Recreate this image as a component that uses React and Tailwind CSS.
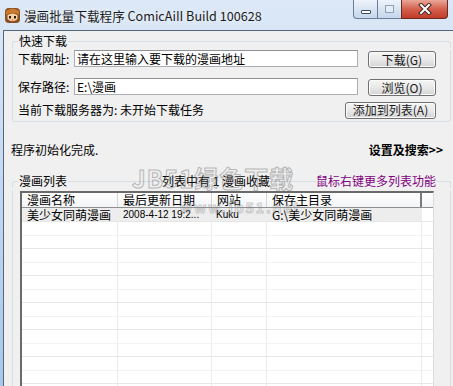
import React from 'react';

const cols = [96, 94, 55, 155];

function WinButton({ children, className = '' }) {
  return (
    <button
      className={`h-[17px] rounded-[3px] border border-[#707070] bg-linear-to-b from-[#f4f4f4] via-[#e9e9e9] to-[#d4d4d4] text-[12px] leading-none text-[#1a1a1a] shadow-[inset_0_0_0_1px_#fbfbfb] ${className}`}
    >
      {children}
    </button>
  );
}

function GroupEdge({ className = '' }) {
  return <div className={`h-[7px] self-end border-t border-[#d5dfe5] ${className}`} />;
}

export default function App() {
  const rows = Array.from({ length: 13 });

  return (
    <div className="relative h-[386px] w-[453px] overflow-hidden bg-linear-to-b from-[#dce8f6] to-[#a9c7ea] font-['Noto_Sans_CJK_SC',sans-serif] text-[12px] leading-[14px] text-black">
      {/* Title bar */}
      <div className="flex h-[30px] items-start">
        <div className="mt-[7px] ml-[4px] shrink-0">
          <svg width="17" height="17" viewBox="0 0 17 17">
            <rect x="1" y="1" width="15" height="15" rx="4" fill="#8a4f1f" />
            <path d="M2 4 Q8.5 -1 15 4 L15 8 Q12 5 9 7 Q6 5 2 8Z" fill="#c97a2e" />
            <path d="M3.5 8 Q8.5 5.5 13.5 8 L13.5 12 Q8.5 16.5 3.5 12Z" fill="#f7d3a4" />
            <rect x="5" y="9" width="2" height="2.5" fill="#2d1a0c" />
            <rect x="10" y="9" width="2" height="2.5" fill="#2d1a0c" />
            <rect x="7.5" y="12.5" width="2" height="1" fill="#d0614a" />
          </svg>
        </div>
        <div className="mt-[7px] ml-[3px] whitespace-nowrap text-[12.6px] leading-[17px] text-[#1b1b1b] [text-shadow:0_0_6px_#ffffff]">
          漫画批量下载程序 ComicAiII Build 100628
        </div>
        <div className="ml-auto mr-[5px] flex h-[19px] w-[95px] shrink-0">
          <div className="flex w-[25px] shrink-0 items-center justify-center rounded-bl-[4px] border border-t-0 border-[#6a7e99] bg-linear-to-b from-[#eef4fb] to-[#c6d6eb]">
            <div className="mt-[5px] h-[4px] w-[10px] rounded-[1px] border border-[#3b4a5e] bg-white" />
          </div>
          <div className="flex w-[23px] shrink-0 items-center justify-center border-b border-[#6a7e99] bg-linear-to-b from-[#eef4fb] to-[#c6d6eb]">
            <div className="h-[8px] w-[9px] border border-[#8fa2ba] bg-[#e6edf6]" />
          </div>
          <div className="flex w-[47px] shrink-0 items-center justify-center rounded-br-[4px] border border-t-0 border-[#6b2a22] bg-linear-to-b from-[#e9a698] via-[#d3604d] to-[#c13c27]">
            <svg width="14" height="12" viewBox="0 0 14 12">
              <path d="M3 2 L11 10 M11 2 L3 10" stroke="#40251f" strokeWidth="4" strokeLinecap="square" />
              <path d="M3 2 L11 10 M11 2 L3 10" stroke="#ffffff" strokeWidth="2" strokeLinecap="square" />
            </svg>
          </div>
        </div>
      </div>

      {/* Client area */}
      <div className="ml-[3px] h-[356px] border-l border-t border-[#55677d] bg-[#f0f0f0]">
        {/* 快速下载 */}
        <div className="mt-[3px] ml-[8px] mr-[2px]">
          <div className="flex h-[14px]">
            <GroupEdge className="w-[6px] rounded-tl-[3px] border-l" />
            <span className="px-[1px]">快速下载</span>
            <GroupEdge className="flex-1 rounded-tr-[3px] border-r" />
          </div>
          <div className="rounded-b-[3px] border border-t-0 border-[#d5dfe5] pl-[5px] pr-[14px] pb-[2px]">
            <div className="mt-[2px] flex h-[18px] items-start">
              <span className="mt-[2px] w-[56px]">下载网址:</span>
              <div className="h-[17px] w-[284px] border border-[#abadb3] border-t-[#8e9196] bg-white pl-[2px] leading-[15px]">
                请在这里输入要下载的漫画地址
              </div>
              <WinButton className="ml-auto mt-[1px] w-[68px]">下载(G)</WinButton>
            </div>
            <div className="mt-[10px] flex h-[18px] items-start">
              <span className="mt-[2px] w-[56px]">保存路径:</span>
              <div className="h-[17px] w-[284px] border border-[#abadb3] border-t-[#8e9196] bg-white pl-[2px] leading-[15px]">
                E:\漫画
              </div>
              <WinButton className="ml-auto mt-[1px] w-[68px]">浏览(O)</WinButton>
            </div>
            <div className="mt-[5px] flex h-[18px] items-center">
              <span>当前下载服务器为: 未开始下载任务</span>
              <WinButton className="ml-auto w-[91px]">添加到列表(A)</WinButton>
            </div>
          </div>
        </div>

        {/* Status */}
        <div className="mt-[21px] flex h-[14px] items-center pl-[7px] pr-[10px]">
          <span>程序初始化完成.</span>
          <span className="ml-auto font-bold">设置及搜索&gt;&gt;</span>
        </div>

        {/* 漫画列表 */}
        <div className="mt-[17px] ml-[8px] mr-[2px]">
          <div className="flex h-[14px]">
            <GroupEdge className="w-[6px] rounded-tl-[3px] border-l" />
            <span className="px-[1px]">漫画列表</span>
            <GroupEdge className="w-[94px]" />
            <span>列表中有 1 漫画收藏</span>
            <GroupEdge className="flex-1" />
            <span className="text-[#800080]">鼠标右键更多列表功能</span>
            <GroupEdge className="w-[15px] rounded-tr-[3px] border-r" />
          </div>
          <div className="border-l border-r border-[#d5dfe5] pl-[7px]">
            <div className="mt-[3px] w-[414px] border-t-2 border-l-2 border-r border-t-[#6a6a6a] border-l-[#6a6a6a] border-r-[#dcdcdc] bg-white">
              {/* Header */}
              <div className="flex h-[15px] border-b border-[#8f8f8f] bg-linear-to-b from-white to-[#f3f4f6]">
                {['漫画名称', '最后更新日期', '网站', '保存主目录'].map((h, i) => (
                  <div
                    key={h}
                    style={{ width: cols[i] }}
                    className={`shrink-0 border-r pl-[5px] leading-[14px] ${i === 3 ? 'border-r-2 border-[#7a7a7a]' : 'border-[#d5d5d5]'}`}
                  >
                    {h}
                  </div>
                ))}
                <div className="flex-1" />
              </div>
              {/* Row 1 */}
              <div className="flex h-[13px] bg-[#ededed]">
                <div style={{ width: cols[0] }} className="shrink-0 pl-[5px] leading-[13px]">美少女同萌漫画</div>
                <div style={{ width: cols[1] }} className="shrink-0 pl-[5px] font-['Liberation_Sans',sans-serif] text-[10px] leading-[13px]">
                  2008-4-12 19:2...
                </div>
                <div style={{ width: cols[2] }} className="shrink-0 pl-[4px] font-['Liberation_Sans',sans-serif] text-[10px] leading-[13px]">
                  Kuku
                </div>
                <div style={{ width: cols[3] }} className="shrink-0 pl-[5px] leading-[13px]">G:\美少女同萌漫画</div>
                <div className="flex-1 bg-white" />
              </div>
              {/* Empty grid rows */}
              {rows.map((_, r) => (
                <div
                  key={r}
                  className={`flex h-[13.5px] border-t ${r % 2 === 0 ? 'border-[#e6e6e6]' : 'border-[#f3f3f3]'}`}
                >
                  {cols.map((w, i) => (
                    <div key={i} style={{ width: w }} className="shrink-0 border-r border-[#ececec]" />
                  ))}
                  <div className="flex-1" />
                </div>
              ))}
            </div>
          </div>
        </div>
      </div>

      {/* Watermark */}
      <div className="pointer-events-none absolute left-[132px] top-[164px] text-[24px] font-bold leading-[28px] tracking-[1px] text-transparent opacity-50 [-webkit-text-stroke:1px_#7d7d7d]">
        JB51绿色下载
      </div>
      <div className="pointer-events-none absolute left-[180px] top-[199px] text-[14px] font-bold leading-[16px] tracking-[2px] text-transparent opacity-40 [-webkit-text-stroke:1px_#8a8a8a]">
        www.jb51.net
      </div>
    </div>
  );
}
